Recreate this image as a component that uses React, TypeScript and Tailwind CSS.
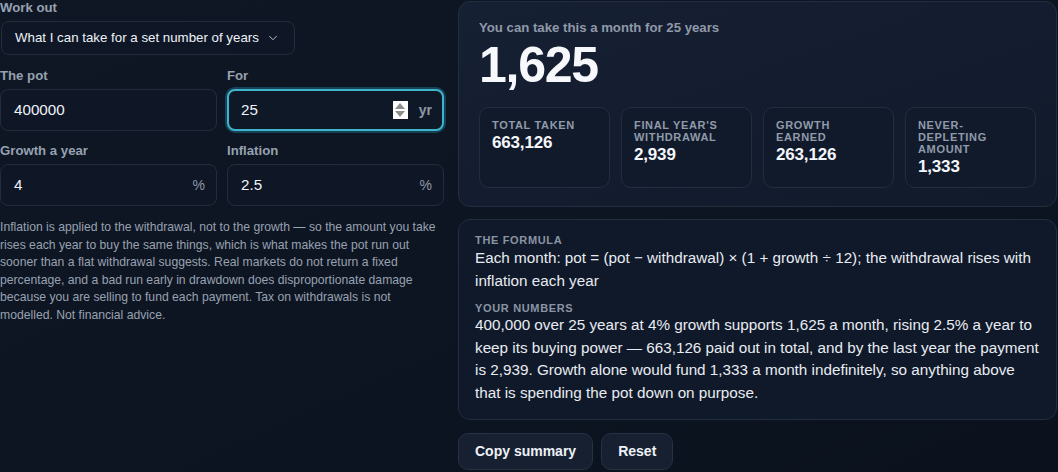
import { ChevronDown } from "lucide-react";

interface FieldProps {
  label: string;
  value: string;
  unit?: string;
  focused?: boolean;
}

function Field({ label, value, unit, focused }: FieldProps) {
  return (
    <div>
      <p className="text-[13.2px] font-bold leading-4 text-[#97a1b0]">{label}</p>
      <div
        className={
          focused
            ? "mt-[5px] flex h-[42px] items-center rounded-lg border-2 border-[#3fb3cb] bg-[#0f1827] pl-[12px] pr-[10px] shadow-[0_0_0_2px_rgba(34,150,180,0.35)]"
            : "mt-[5px] flex h-[42px] items-center rounded-lg border border-[#222c3c] bg-[#0f1727] pl-[13px] pr-[11px]"
        }
      >
        <span className="flex-1 text-[15.2px] text-[#eef2f7]">{value}</span>
        {focused && (
          <span className="mr-[11px] flex h-[18px] w-[15px] flex-col items-center justify-center gap-[2px] bg-white">
            <span className="h-0 w-0 border-x-[5px] border-b-[6px] border-x-transparent border-b-[#8d8d8d]" />
            <span className="h-0 w-0 border-x-[5px] border-t-[6px] border-x-transparent border-t-[#8d8d8d]" />
          </span>
        )}
        {unit && (
          <span
            className={
              unit === "yr"
                ? "text-[14px] font-bold text-[#8e98a7]"
                : "text-[14px] text-[#8e98a7]"
            }
          >
            {unit}
          </span>
        )}
      </div>
    </div>
  );
}

interface StatProps {
  label: string;
  value: string;
}

function Stat({ label, value }: StatProps) {
  return (
    <div className="rounded-[10px] border border-[#222d3f] bg-[#111a2b] px-3 pt-[11px] pb-[10px]">
      <p className="text-[11px] font-bold uppercase leading-[12px] tracking-[0.06em] text-[#909aaa]">
        {label}
      </p>
      <p className="mt-[2px] text-[17px] font-bold leading-5 tracking-[-0.01em] text-[#f3f6fa]">
        {value}
      </p>
    </div>
  );
}

const stats: StatProps[] = [
  { label: "Total taken", value: "663,126" },
  { label: "Final year's withdrawal", value: "2,939" },
  { label: "Growth earned", value: "263,126" },
  { label: "Never-depleting amount", value: "1,333" },
];

export default function App() {
  return (
    <div className="min-h-screen bg-gradient-to-br from-[#0f1725] via-[#0d1522] to-[#0b121e] font-['Liberation_Sans',Arial,sans-serif] text-[#eef2f7]">
      <div className="flex gap-[14px]">
        {/* inputs */}
        <div className="w-[444px] shrink-0">
          <p className="text-[13.2px] font-bold leading-4 text-[#97a1b0]">Work out</p>
          <div className="ml-px mt-[5px] flex h-[34px] w-[294px] items-center justify-between rounded-lg border border-[#222c3c] bg-[#0f1727] pl-[13px] pr-[14px] text-[13.3px] text-[#eef2f7]">
            <span>What I can take for a set number of years</span>
            <ChevronDown size={14} strokeWidth={1.6} className="text-[#c3cad4]" />
          </div>

          <div className="mt-[13px] grid grid-cols-2 gap-x-[10px] gap-y-3">
            <Field label="The pot" value="400000" />
            <Field label="For" value="25" unit="yr" focused />
            <Field label="Growth a year" value="4" unit="%" />
            <Field label="Inflation" value="2.5" unit="%" />
          </div>

          <p className="mt-[13px] text-[12.2px] leading-[17.6px] text-[#98a1b0]">
            Inflation is applied to the withdrawal, not to the growth — so the amount you take
            rises each year to buy the same things, which is what makes the pot run out sooner
            than a flat withdrawal suggests. Real markets do not return a fixed percentage, and a
            bad run early in drawdown does disproportionate damage because you are selling to
            fund each payment. Tax on withdrawals is not modelled. Not financial advice.
          </p>
        </div>

        {/* results */}
        <div className="w-[599px] shrink-0">
          <div className="mt-px rounded-xl border border-[#222d3f] bg-gradient-to-br from-[#162033] to-[#111a2b] px-5 pt-[18px] pb-[18px]">
            <p className="text-[13.2px] font-bold leading-4 text-[#8f99a9]">
              You can take this a month for 25 years
            </p>
            <p className="mt-[4px] text-[50px] font-bold leading-none tracking-tight text-[#f6f8fb]">
              1,625
            </p>
            <div className="mt-[17px] grid grid-cols-4 gap-[11px]">
              {stats.map((s) => (
                <Stat key={s.label} label={s.label} value={s.value} />
              ))}
            </div>
          </div>

          <div className="mt-3 rounded-xl border border-[#222d3f] bg-[#101929] px-4 pt-[14px] pb-[14px]">
            <p className="text-[11px] font-bold uppercase leading-[12px] tracking-[0.06em] text-[#8a94a4]">
              The formula
            </p>
            <p className="text-[15.25px] leading-[23px] text-[#e8ecf2]">
              Each month: pot = (pot − withdrawal) × (1 + growth ÷ 12); the withdrawal rises with
              inflation each year
            </p>
            <p className="mt-[10px] text-[11px] font-bold uppercase leading-[12px] tracking-[0.06em] text-[#8a94a4]">
              Your numbers
            </p>
            <p className="text-[15.25px] leading-[22.7px] text-[#e8ecf2]">
              400,000 over 25 years at 4% growth supports 1,625 a month, rising 2.5% a year to keep
              its buying power — 663,126 paid out in total, and by the last year the payment is
              2,939. Growth alone would fund 1,333 a month indefinitely, so anything above that is
              spending the pot down on purpose.
            </p>
          </div>

          <div className="mt-[13px] flex gap-2">
            <button
              type="button"
              className="h-[37px] rounded-[10px] border border-[#263144] bg-[#162031] px-4 text-[14px] font-bold text-[#eef2f7]"
            >
              Copy summary
            </button>
            <button
              type="button"
              className="h-[37px] rounded-[10px] border border-[#263144] bg-[#162031] px-4 text-[14px] font-bold text-[#eef2f7]"
            >
              Reset
            </button>
          </div>
        </div>
      </div>
    </div>
  );
}
